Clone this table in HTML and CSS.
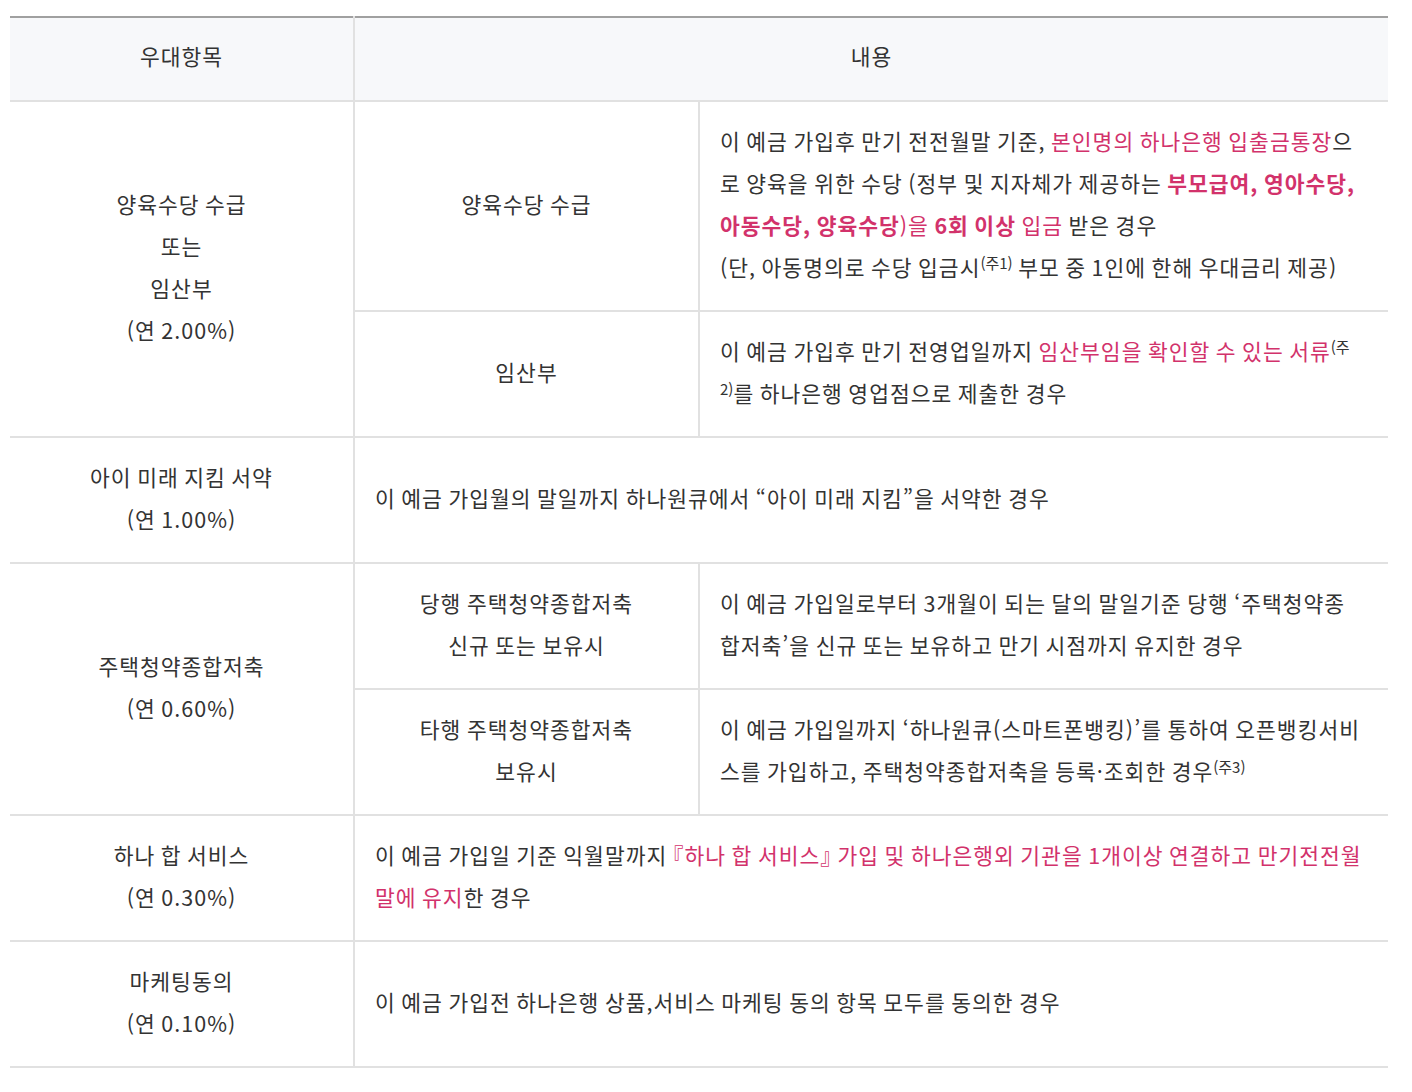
FILE: index.html
```html
<!DOCTYPE html>
<html lang="ko">
<head>
<meta charset="utf-8">
<title>우대금리</title>
<link rel="stylesheet" href="styles.css">
</head>
<body>
<table class="rate-table">
  <colgroup>
    <col class="col-item">
    <col class="col-sub">
    <col class="col-desc">
  </colgroup>
  <thead>
    <tr>
      <th>우대항목</th>
      <th colspan="2">내용</th>
    </tr>
  </thead>
  <tbody>
    <tr>
      <td class="center" rowspan="2">양육수당 수급<br>또는<br>임산부<br>(연 2.00%)</td>
      <td class="center">양육수당 수급</td>
      <td class="desc">이 예금 가입후 만기 전전월말 기준, <span class="hl">본인명의 하나은행 입출금통장</span>으로 양육을 위한 수당 (정부 및 지자체가 제공하는 <span class="hl strong">부모급여, 영아수당, 아동수당, 양육수당</span><span class="hl">)을</span> <span class="hl strong">6회 이상</span> <span class="hl">입금</span> 받은 경우<br>(단, 아동명의로 수당 입금시<sup>(주1)</sup> 부모 중 1인에 한해 우대금리 제공)</td>
    </tr>
    <tr>
      <td class="center">임산부</td>
      <td class="desc">이 예금 가입후 만기 전영업일까지 <span class="hl">임산부임을 확인할 수 있는 서류</span><sup>(주&#8203;2)</sup>를 하나은행 영업점으로 제출한 경우</td>
    </tr>
    <tr>
      <td class="center">아이 미래 지킴 서약<br>(연 1.00%)</td>
      <td class="desc wide" colspan="2">이 예금 가입월의 말일까지 하나원큐에서 “아이 미래 지킴”을 서약한 경우</td>
    </tr>
    <tr>
      <td class="center" rowspan="2">주택청약종합저축<br>(연 0.60%)</td>
      <td class="center">당행 주택청약종합저축<br>신규 또는 보유시</td>
      <td class="desc">이 예금 가입일로부터 3개월이 되는 달의 말일기준 당행 ‘주택청약종합저축’을 신규 또는 보유하고 만기 시점까지 유지한 경우</td>
    </tr>
    <tr>
      <td class="center">타행 주택청약종합저축<br>보유시</td>
      <td class="desc">이 예금 가입일까지 ‘하나원큐(스마트폰뱅킹)’를 통하여 오픈뱅킹서비스를 가입하고, 주택청약종합저축을 등록·조회한 경우<sup>(주3)</sup></td>
    </tr>
    <tr>
      <td class="center">하나 합 서비스<br>(연 0.30%)</td>
      <td class="desc wide" colspan="2">이 예금 가입일 기준 익월말까지 <span class="hl"><span class="punct">『</span>하나 합 서비스<span class="punct">』</span> 가입 및 하나은행외 기관을 1개이상 연결하고 만기전전월말에 유지</span>한 경우</td>
    </tr>
    <tr>
      <td class="center">마케팅동의<br>(연 0.10%)</td>
      <td class="desc wide" colspan="2">이 예금 가입전 하나은행 상품,서비스 마케팅 동의 항목 모두를 동의한 경우</td>
    </tr>
  </tbody>
</table>
</body>
</html>
```
FILE: styles.css
```css
html, body {
  margin: 0;
  padding: 0;
  background: #ffffff;
}

body {
  padding: 16px 10px 0 10px;
  font-family: "Noto Sans CJK KR", "Noto Sans", "Liberation Sans", sans-serif;
  color: #333333;
  font-size: 21.5px;
  letter-spacing: 1px;
  word-spacing: -1.5px;
  line-height: 42px;
}

.rate-table {
  width: 1378px;
  border-collapse: collapse;
  table-layout: fixed;
  border-top: 2px solid #a0a0a0;
}

.col-item { width: 344px; }
.col-sub { width: 345px; }

.rate-table th {
  background: #f7f8fa;
  font-weight: normal;
  height: 76px;
  padding: 0 0 6px 0;
  text-align: center;
  vertical-align: middle;
  border-bottom: 2px solid #e1e1e1;
  border-left: 2px solid #e1e1e1;
}

.rate-table th:first-child { border-left: none; }

.rate-table td {
  padding: 18px 27px 22px 20px;
  vertical-align: middle;
  border-bottom: 2px solid #e1e1e1;
  border-left: 2px solid #e1e1e1;
}

.rate-table td.center {
  padding-left: 20px;
  padding-right: 20px;
}

.rate-table td.wide {
  padding-right: 18px;
}

.rate-table tbody tr:nth-child(1) > td:first-child,
.rate-table tbody tr:nth-child(3) > td:first-child,
.rate-table tbody tr:nth-child(4) > td:first-child,
.rate-table tbody tr:nth-child(6) > td:first-child,
.rate-table tbody tr:nth-child(7) > td:first-child {
  border-left: none;
}

.center { text-align: center; }

.desc { text-align: left; }

.hl { color: #d2326b; }

.strong { font-weight: bold; }

.punct { font-feature-settings: "halt"; }

sup {
  font-size: 15px;
  letter-spacing: 0;
  line-height: 0;
  vertical-align: 7px;
}
```
